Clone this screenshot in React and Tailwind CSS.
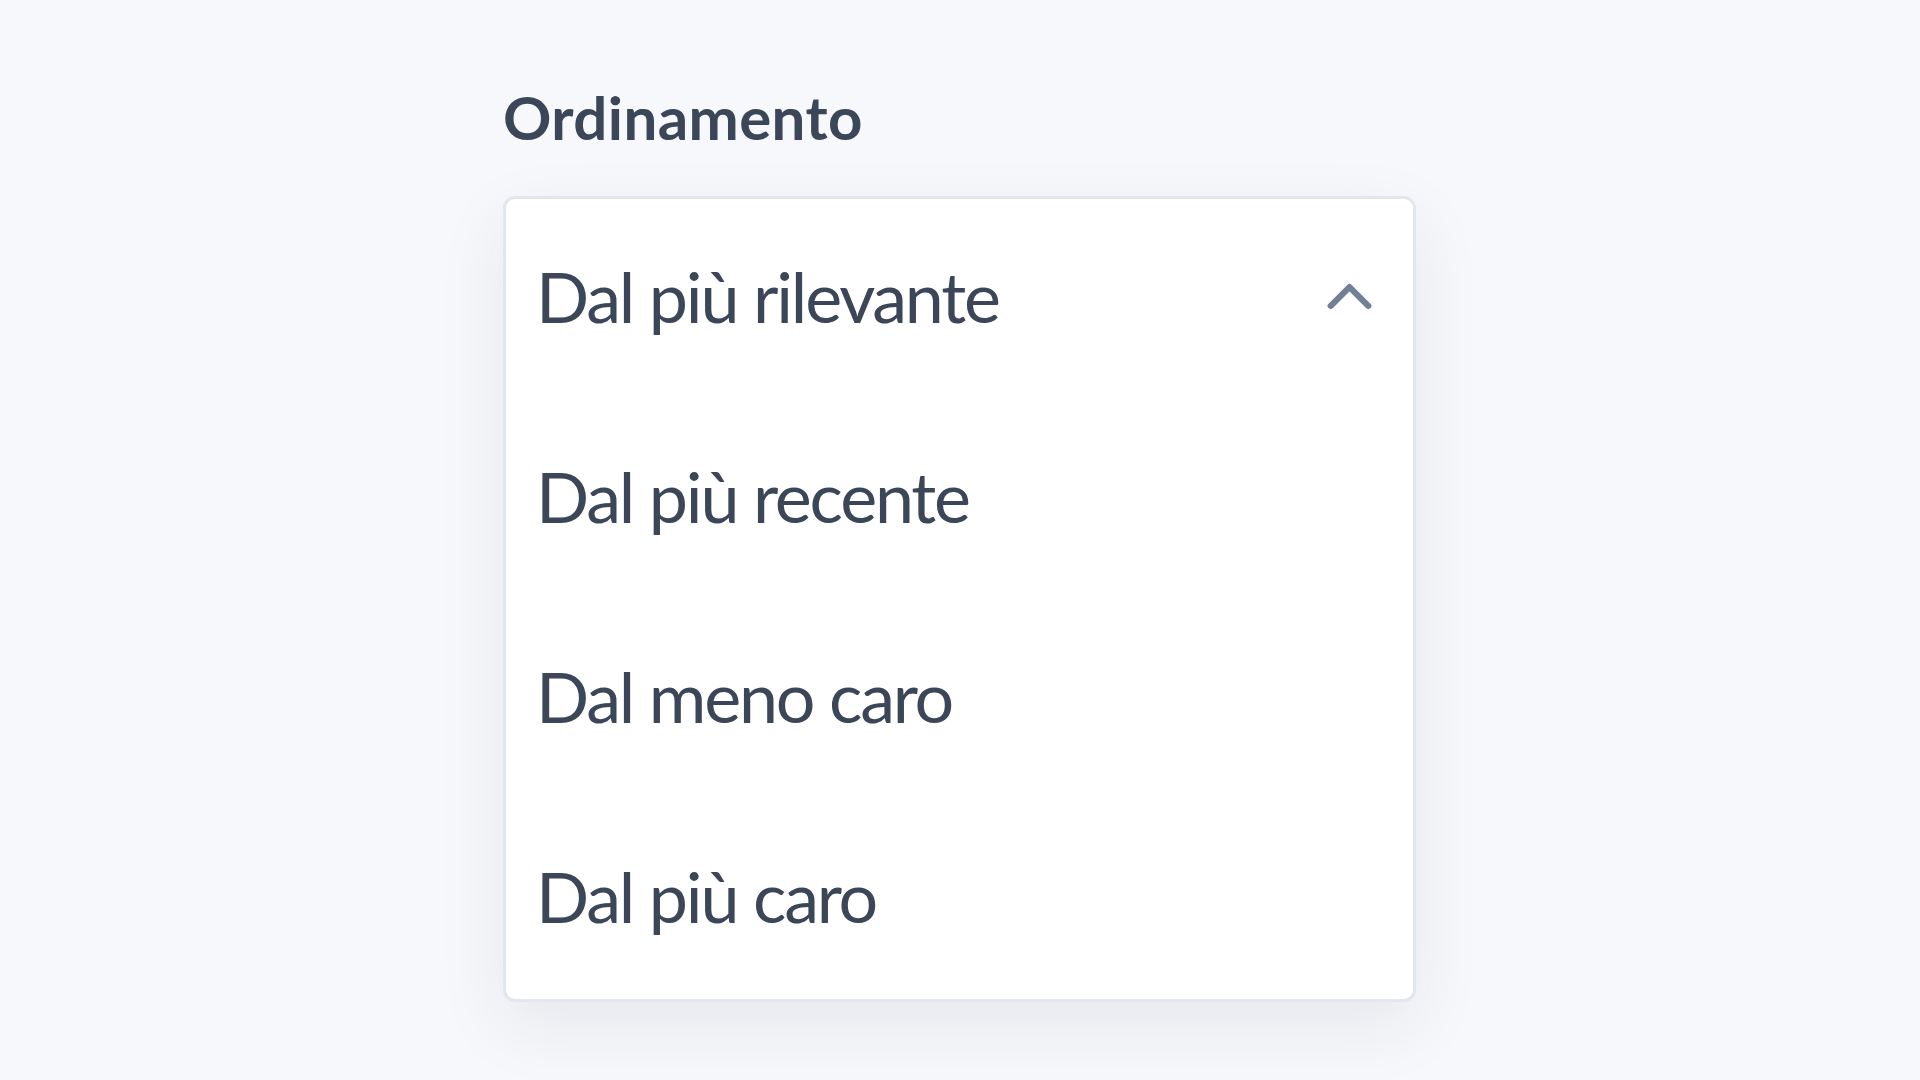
import React, { useState } from 'react';
import { ChevronUp } from 'lucide-react';

const options = [
    'Dal più rilevante',
    'Dal più recente',
    'Dal meno caro',
    'Dal più caro',
];

const SortSelect = () => {
    const [selected, setSelected] = useState(options[0]);

    return (
        <div className="min-h-screen bg-[#f7f8fb] pl-[503px] pt-[80px] text-[#3b4758] font-['Lato',sans-serif]">
            <h2 className="text-[60px] font-bold leading-[74px] tracking-[0.4px] mb-[42px]">Ordinamento</h2>

            <ul className="w-[913px] bg-white border-[3px] border-[#e2e6ef] rounded-[12px] shadow-[0_24px_70px_rgba(30,41,59,0.08)]">
                {options.map((option, i) => (
                    <li
                        key={option}
                        onClick={() => setSelected(option)}
                        className="h-[200px] flex items-center justify-between pl-[30px] pr-[26px] pb-[6px] cursor-pointer"
                    >
                        <span className="text-[70px] leading-none tracking-[-2.2px]">{option}</span>
                        {i === 0 && (
                            <ChevronUp size={75} strokeWidth={2} className="text-[#718096]" />
                        )}
                    </li>
                ))}
            </ul>
        </div>
    );
};

export default SortSelect;
